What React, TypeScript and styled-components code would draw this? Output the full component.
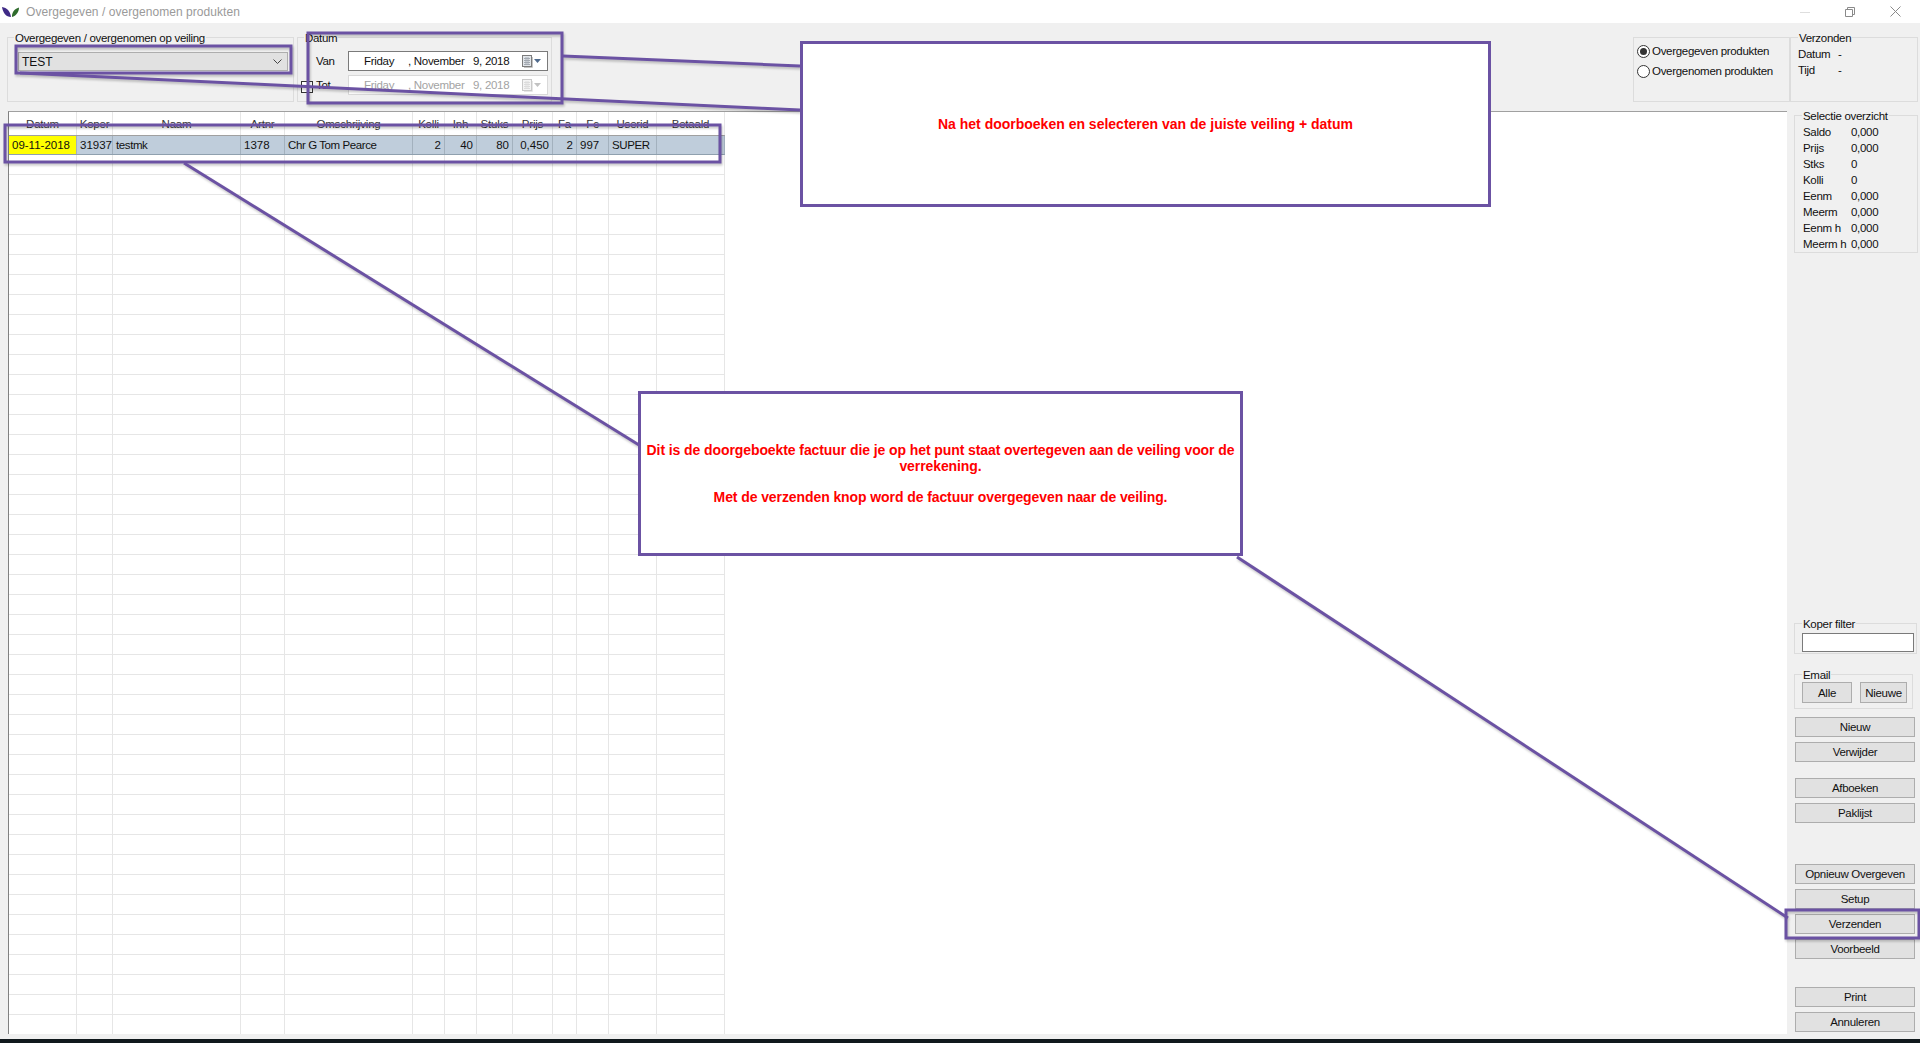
import React from 'react';
import styled, { createGlobalStyle } from 'styled-components';

const GlobalStyle = createGlobalStyle`
  html, body {
    margin: 0;
    padding: 0;
    background: #f0f0f0;
    overflow: hidden;
  }
  * {
    box-sizing: border-box;
  }
`;

const COLUMNS = '68px 36px 128px 44px 128px 32px 32px 36px 40px 24px 32px 48px 68px';
const PURPLE = '#6b52a3';

const Page = styled.div`
  position: relative;
  width: 1920px;
  height: 1043px;
  display: flex;
  flex-direction: column;
  background: #f0f0f0;
  color: #111;
  font-family: 'Liberation Sans', Arial, sans-serif;
  font-size: 11.5px;
  letter-spacing: -0.3px;
  overflow: hidden;
`;

const TitleBar = styled.div`
  height: 23px;
  flex: none;
  display: flex;
  align-items: center;
  background: #fff;
  padding-left: 2px;
`;

const TitleText = styled.span`
  margin-left: 7px;
  color: #9a9a9a;
  font-size: 12px;
  letter-spacing: 0.05px;
`;

const WindowButtons = styled.div`
  margin-left: auto;
  display: flex;
  align-items: center;
  gap: 35px;
  padding-right: 19px;
  color: #8a8a8a;
`;

const Toolbar = styled.div`
  height: 88px;
  flex: none;
  display: flex;
  padding: 14px 2px 0 7px;
`;

const Group = styled.div<{ $w: number; $h: number }>`
  position: relative;
  flex: none;
  width: ${p => p.$w}px;
  height: ${p => p.$h}px;
  border: 1px solid #dcdcdc;
`;

const Legend = styled.span`
  position: absolute;
  top: -7px;
  left: 7px;
  padding: 0 1px;
  background: #f0f0f0;
  line-height: 14px;
  white-space: nowrap;
`;

const VeilingGroup = styled(Group)`
  padding: 14px 0 0 10px;
  ${Legend} {
    left: 6px;
  }
`;

const DateGroup = styled(Group)`
  margin-left: 3px;
  padding: 13px 4px 0 18px;
  display: flex;
  flex-direction: column;
  gap: 4px;
  ${Legend} {
    left: 6px;
  }
`;

const RadioGroup = styled(Group)`
  margin-left: auto;
  padding: 3px 0 0 3px;
`;

const SentGroup = styled(Group)`
  padding: 8px 0 0 7px;
`;

const Combo = styled.div`
  width: 270px;
  height: 19px;
  display: flex;
  align-items: center;
  justify-content: space-between;
  padding: 0 5px 0 3px;
  background: #e1e1e1;
  border: 1px solid #adadad;
  font-size: 12px;
  letter-spacing: 0;
`;

const DateRow = styled.div`
  display: flex;
  align-items: center;
  height: 20px;
`;

const DateLabel = styled.span`
  width: 32px;
  flex: none;
`;

const CheckBox = styled.span`
  position: absolute;
  left: 3px;
  top: 43px;
  width: 12px;
  height: 12px;
  border: 1px solid #333;
  background: #fff;
`;

const DatePicker = styled.div<{ $disabled?: boolean }>`
  flex: none;
  width: 200px;
  height: 20px;
  display: flex;
  align-items: center;
  padding-left: 15px;
  background: #fff;
  border: 1px solid ${p => (p.$disabled ? '#d9d9d9' : '#7a7a7a')};
  color: ${p => (p.$disabled ? '#a3a3a3' : '#111')};
`;

const DatePart = styled.span<{ $w: number }>`
  flex: none;
  width: ${p => p.$w}px;
  white-space: nowrap;
`;

const RadioRow = styled.label`
  display: flex;
  align-items: center;
  gap: 2px;
  height: 20px;
  white-space: nowrap;
`;

const RadioMark = styled.span<{ $on?: boolean }>`
  flex: none;
  width: 13px;
  height: 13px;
  border-radius: 50%;
  border: 1px solid #333;
  background: #fff;
  display: flex;
  align-items: center;
  justify-content: center;
  &::after {
    content: '';
    width: 7px;
    height: 7px;
    border-radius: 50%;
    background: ${p => (p.$on ? '#333' : 'transparent')};
  }
`;

const InfoRow = styled.div<{ $label: number }>`
  display: grid;
  grid-template-columns: ${p => p.$label}px 1fr;
  height: 16px;
  line-height: 16px;
  white-space: nowrap;
`;

const Main = styled.div`
  flex: 1;
  min-height: 0;
  display: flex;
  padding-bottom: 5px;
`;

const Sheet = styled.div`
  width: 1779px;
  margin-left: 8px;
  flex: none;
  background: #fff;
  border-left: 1px solid #808080;
  border-top: 1px solid #a0a0a0;
  overflow: hidden;
`;

const Row = styled.div<{ $kind?: 'head' | 'selected' }>`
  display: grid;
  grid-template-columns: ${COLUMNS};
  width: 716px;
  height: ${p => (p.$kind === 'head' ? 24 : p.$kind === 'selected' ? 19 : 20)}px;
  background: ${p => (p.$kind === 'selected' ? '#bfcddb' : '#fff')};
  border-bottom: 1px solid ${p => (p.$kind === 'head' ? '#a0a0a0' : p.$kind === 'selected' ? '#8fa0ae' : '#e6e6e6')};
`;

const Cell = styled.div<{ $align?: string; $mark?: boolean; $narrow?: boolean }>`
  display: flex;
  align-items: center;
  justify-content: ${p => p.$align || 'flex-start'};
  padding: 0 3px;
  background: ${p => (p.$mark ? '#ffff00' : 'transparent')};
  border-right: 1px solid #e6e6e6;
  white-space: nowrap;
  overflow: hidden;
  font-size: 11.5px;
  letter-spacing: ${p => (p.$narrow ? '-0.4px' : '0')};
`;

const SelectedCell = styled(Cell)`
  border-right-color: #a3b1be;
`;

const HeadCell = styled(Cell)`
  justify-content: center;
  padding: 0;
  color: #333;
  letter-spacing: -0.2px;
`;

const Sidebar = styled.div`
  flex: none;
  width: 133px;
  display: flex;
  flex-direction: column;
  padding: 4px 0 2px 7px;
`;

const SummaryGroup = styled(Group)`
  padding: 8px 0 0 8px;
`;

const KoperGroup = styled(Group)`
  margin-top: auto;
  padding: 9px 0 0 7px;
`;

const KoperInput = styled.div`
  width: 112px;
  height: 19px;
  background: #fff;
  border: 1px solid #7a7a7a;
`;

const EmailGroup = styled(Group)`
  margin-top: 20px;
  padding: 7px 0 0 7px;
  display: flex;
  gap: 8px;
`;

const ActionStack = styled.div<{ $top: number }>`
  display: flex;
  flex-direction: column;
  gap: 5px;
  margin: ${p => p.$top}px 0 0 1px;
`;

const Button = styled.div<{ $w?: number; $h?: number }>`
  width: ${p => p.$w ?? 120}px;
  height: ${p => p.$h ?? 20}px;
  flex: none;
  display: flex;
  align-items: center;
  justify-content: center;
  background: #e1e1e1;
  border: 1px solid #adadad;
  white-space: nowrap;
`;

const TaskBar = styled.div`
  height: 4px;
  flex: none;
  background: #10181c;
`;

const Drawing = styled.svg`
  position: absolute;
  left: 0;
  top: 0;
  pointer-events: none;
  filter: drop-shadow(1px 2px 1px rgba(0, 0, 0, 0.22));
`;

const Callout = styled.div<{ $x: number; $y: number; $w: number; $h: number; $spacing: number }>`
  position: absolute;
  left: ${p => p.$x}px;
  top: ${p => p.$y}px;
  width: ${p => p.$w}px;
  height: ${p => p.$h}px;
  display: flex;
  flex-direction: column;
  align-items: center;
  justify-content: center;
  background: #fff;
  border: 3px solid ${PURPLE};
  color: #ff0000;
  font-weight: bold;
  font-size: 14px;
  letter-spacing: ${p => p.$spacing}px;
  line-height: 16px;
  text-align: center;
`;

const CalloutLine = styled.p<{ $gap?: boolean }>`
  margin: ${p => (p.$gap ? 15 : 0)}px 0 0;
`;

const Logo = () => (
  <svg width="17" height="10" viewBox="0 0 17 10">
    <path d="M0 0C5 0.8 8.2 4 9 10C4 10 1 6 0 0Z" fill="#3f2a86" />
    <path d="M17 0.5C17 5 14 9 10 10C9.6 6 12 2 17 0.5Z" fill="#2f6b2c" />
  </svg>
);

const WindowIcons = () => (
  <WindowButtons>
    <svg width="10" height="10" viewBox="0 0 10 10"><path d="M0 5.5H10" stroke="#dedede" /></svg>
    <svg width="10" height="10" viewBox="0 0 10 10" fill="none" stroke="currentColor">
      <path d="M0.5 2.5H7.5V9.5H0.5Z" />
      <path d="M2.5 2.5V0.5H9.5V7.5H7.5" />
    </svg>
    <svg width="11" height="11" viewBox="0 0 11 11" fill="none" stroke="currentColor"><path d="M0.5 0.5L10.5 10.5M10.5 0.5L0.5 10.5" /></svg>
  </WindowButtons>
);

const Chevron = () => (
  <svg width="9" height="6" viewBox="0 0 9 6" fill="none" stroke="#444">
    <path d="M0.5 0.5L4.5 4.5L8.5 0.5" />
  </svg>
);

const CalendarIcon = ({ disabled }: { disabled?: boolean }) => (
  <svg width="20" height="13" viewBox="0 0 20 13">
    <path d="M2 12.5H10.5V2" fill="none" stroke={disabled ? '#e6e6e6' : '#c4c4c4'} />
    <rect x="0.5" y="0.5" width="9" height="11" fill={disabled ? '#f4f4f4' : '#e2e6ea'} stroke={disabled ? '#c9c9c9' : '#7c7c7c'} />
    <path d="M2 3.5H8M2 5.5H8M2 7.5H8M2 9.5H8M4 2V10M6 2V10" stroke={disabled ? '#dcdcdc' : '#a4aab2'} />
    <path d="M12 4H19L15.5 8Z" fill={disabled ? '#c2c2c2' : '#4f6a8c'} />
  </svg>
);

const HEADERS = ['Datum', 'Koper', 'Naam', 'Artnr', 'Omschrijving', 'Kolli', 'Inh', 'Stuks', 'Prijs', 'Fa', 'Fc', 'Userid', 'Betaald'];

const SELECTED: { text: string; align?: string; mark?: boolean; narrow?: boolean }[] = [
  { text: '09-11-2018', mark: true },
  { text: '31937' },
  { text: 'testmk', narrow: true },
  { text: '1378' },
  { text: 'Chr G Tom Pearce', narrow: true },
  { text: '2', align: 'flex-end' },
  { text: '40', align: 'flex-end' },
  { text: '80', align: 'flex-end' },
  { text: '0,450', align: 'flex-end' },
  { text: '2', align: 'flex-end' },
  { text: '997' },
  { text: 'SUPER', narrow: true },
  { text: '' },
];

const SUMMARY = [
  ['Saldo', '0,000'],
  ['Prijs', '0,000'],
  ['Stks', '0'],
  ['Kolli', '0'],
  ['Eenm', '0,000'],
  ['Meerm', '0,000'],
  ['Eenm h', '0,000'],
  ['Meerm h', '0,000'],
];

const ACTIONS: { top: number; labels: string[] }[] = [
  { top: 8, labels: ['Nieuw', 'Verwijder'] },
  { top: 16, labels: ['Afboeken', 'Paklijst'] },
  { top: 41, labels: ['Opnieuw Overgeven', 'Setup', 'Verzenden', 'Voorbeeld'] },
  { top: 28, labels: ['Print', 'Annuleren'] },
];

const DateValue = ({ disabled }: { disabled?: boolean }) => (
  <DatePicker $disabled={disabled}>
    <DatePart $w={44}>Friday</DatePart>
    <DatePart $w={65}>, November</DatePart>
    <DatePart $w={49}>9, 2018</DatePart>
    <CalendarIcon disabled={disabled} />
  </DatePicker>
);

const Annotations = () => (
  <>
    <Drawing width="1920" height="1043" viewBox="0 0 1920 1043" fill="none" stroke={PURPLE} strokeWidth="3">
      <rect x="16" y="46" width="275" height="27" />
      <rect x="308" y="33" width="254" height="70" />
      <rect x="5" y="125" width="715" height="37" />
      <rect x="1786" y="910" width="133" height="28" />
      <path d="M563 56L800 66" />
      <path d="M20 73L800 110" />
      <path d="M184 163L639 445" />
      <path d="M1237 557L1788 918" />
    </Drawing>
    <Callout $x={800} $y={41} $w={691} $h={166} $spacing={0}>
      <CalloutLine>Na het doorboeken en selecteren van de juiste veiling + datum</CalloutLine>
    </Callout>
    <Callout $x={638} $y={391} $w={605} $h={165} $spacing={-0.09}>
      <CalloutLine>Dit is de doorgeboekte factuur die je op het punt staat overtegeven aan de veiling voor de</CalloutLine>
      <CalloutLine>verrekening.</CalloutLine>
      <CalloutLine $gap>Met de verzenden knop word de factuur overgegeven naar de veiling.</CalloutLine>
    </Callout>
  </>
);

export default function App() {
  return (
    <Page>
      <GlobalStyle />
      <TitleBar>
        <Logo />
        <TitleText>Overgegeven / overgenomen produkten</TitleText>
        <WindowIcons />
      </TitleBar>

      <Toolbar>
        <VeilingGroup $w={287} $h={65}>
          <Legend>Overgegeven / overgenomen op veiling</Legend>
          <Combo>
            TEST
            <Chevron />
          </Combo>
        </VeilingGroup>
        <DateGroup $w={255} $h={65}>
          <Legend>Datum</Legend>
          <DateRow>
            <DateLabel>Van</DateLabel>
            <DateValue />
          </DateRow>
          <DateRow>
            <CheckBox />
            <DateLabel>Tot</DateLabel>
            <DateValue disabled />
          </DateRow>
        </DateGroup>
        <RadioGroup $w={157} $h={65}>
          <RadioRow><RadioMark $on />Overgegeven produkten</RadioRow>
          <RadioRow><RadioMark />Overgenomen produkten</RadioRow>
        </RadioGroup>
        <SentGroup $w={128} $h={65}>
          <Legend>Verzonden</Legend>
          <InfoRow $label={40}><span>Datum</span><span>-</span></InfoRow>
          <InfoRow $label={40}><span>Tijd</span><span>-</span></InfoRow>
        </SentGroup>
      </Toolbar>

      <Main>
        <Sheet>
          <Row $kind="head">
            {HEADERS.map(h => <HeadCell key={h}>{h}</HeadCell>)}
          </Row>
          <Row $kind="selected">
            {SELECTED.map((c, i) => (
              <SelectedCell key={i} $align={c.align} $mark={c.mark} $narrow={c.narrow}>{c.text}</SelectedCell>
            ))}
          </Row>
          {Array.from({ length: 44 }, (_, r) => (
            <Row key={r}>
              {HEADERS.map(h => <Cell key={h} />)}
            </Row>
          ))}
        </Sheet>

        <Sidebar>
          <SummaryGroup $w={124} $h={138}>
            <Legend>Selectie overzicht</Legend>
            {SUMMARY.map(([label, value]) => (
              <InfoRow key={label} $label={48}><span>{label}</span><span>{value}</span></InfoRow>
            ))}
          </SummaryGroup>

          <KoperGroup $w={123} $h={31}>
            <Legend>Koper filter</Legend>
            <KoperInput />
          </KoperGroup>

          <EmailGroup $w={119} $h={35}>
            <Legend>Email</Legend>
            <Button $w={50} $h={21}>Alle</Button>
            <Button $w={47} $h={21}>Nieuwe</Button>
          </EmailGroup>

          {ACTIONS.map(stack => (
            <ActionStack key={stack.labels[0]} $top={stack.top}>
              {stack.labels.map(label => <Button key={label}>{label}</Button>)}
            </ActionStack>
          ))}
        </Sidebar>
      </Main>
      <TaskBar />

      <Annotations />
    </Page>
  );
}
